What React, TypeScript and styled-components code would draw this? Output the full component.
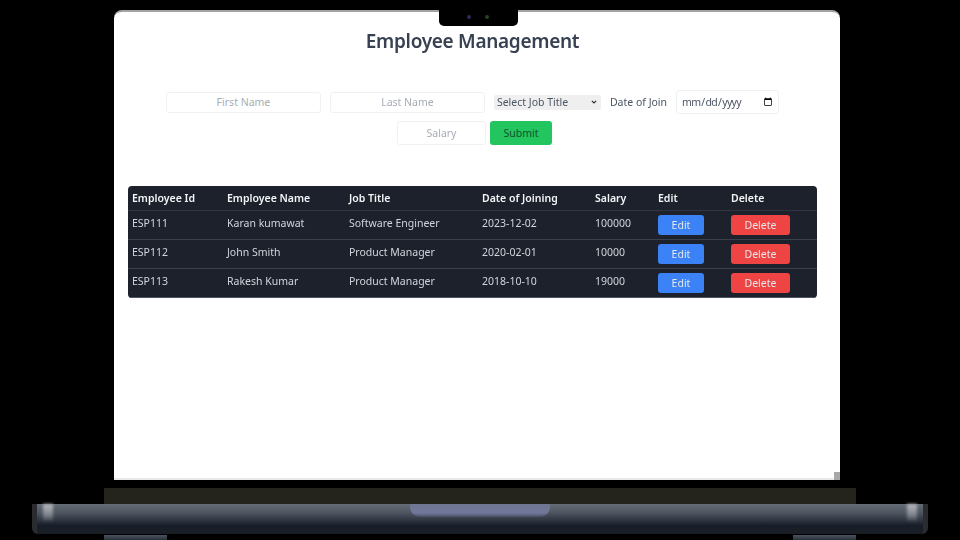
import React from "react";
import styled, { createGlobalStyle } from "styled-components";

const Global = createGlobalStyle`
  html, body { margin: 0; padding: 0; background: #000; }
  * { box-sizing: border-box; }
  body { font-family: "Noto Sans", "Liberation Sans", sans-serif; }
`;

const Laptop = styled.div`
  width: 960px;
  height: 540px;
  background: #000;
  overflow: hidden;
  display: flex;
  flex-direction: column;
  align-items: center;
  padding-top: 10px;
`;

const Screen = styled.main`
  position: relative;
  width: 726px;
  height: 470px;
  flex: none;
  margin-right: 6px;
  background: #fff;
  border-top: 2px solid #a3a3a3;
  border-bottom: 2px solid #e8e8e8;
  border-radius: 8px 8px 0 0;
  padding: 12px 13px 0 14px;
  color: #374151;
`;

const Notch = styled.div`
  position: absolute;
  top: -2px;
  left: 325px;
  width: 79px;
  height: 16px;
  background: #000;
  border-radius: 0 0 5px 5px;
  display: flex;
  justify-content: center;
  align-items: center;
  gap: 14px;
  padding: 0 2px 3px 0;
`;

const Lens = styled.span<{ $color: string }>`
  width: 4px;
  height: 4px;
  border-radius: 50%;
  background: ${(p) => p.$color};
  filter: blur(0.6px);
`;

const CornerMark = styled.span`
  position: absolute;
  right: 0;
  bottom: -2px;
  width: 6px;
  height: 8px;
  background: #a8a8a8;
`;

const Title = styled.h1`
  margin: 0;
  padding-right: 10px;
  font-size: 19px;
  line-height: 34px;
  font-weight: 600;
  letter-spacing: -0.3px;
  text-align: center;
  color: #374151;
  filter: blur(0.3px);
`;

const Form = styled.form`
  margin-top: 32px;
  display: flex;
  flex-wrap: wrap;
  justify-content: center;
  align-items: center;
  padding-right: 10px;
  font-size: 10.5px;
  color: #4b5563;
  filter: blur(0.3px);
`;

const Field = styled.input<{ $width: number; $height: number; $ml: number; $mr: number }>`
  width: ${(p) => p.$width}px;
  height: ${(p) => p.$height}px;
  margin-left: ${(p) => p.$ml}px;
  margin-right: ${(p) => p.$mr}px;
  border: 1px solid #f0f1f3;
  border-radius: 3px;
  background: #fff;
  font: 10.5px "Noto Sans", sans-serif;
  text-align: center;
  outline: none;
  padding: 0 4px;
  &::placeholder { color: #a8adb5; opacity: 1; }
`;

const JobSelect = styled.select`
  appearance: none;
  width: 107px;
  height: 15px;
  margin-right: 9px;
  border: none;
  border-radius: 2px;
  background: #efefef url("data:image/svg+xml,%3Csvg xmlns='http://www.w3.org/2000/svg' width='6' height='4'%3E%3Cpath d='M.8.8 3 3l2.2-2.2' fill='none' stroke='%23333' stroke-width='1.2'/%3E%3C/svg%3E") no-repeat right 4px center;
  color: #4b5563;
  font: 10.5px "Noto Sans", sans-serif;
  padding: 0 3px;
  outline: none;
`;

const Label = styled.label`
  margin-right: 9px;
  line-height: 15px;
  white-space: nowrap;
`;

const DateField = styled.input`
  width: 103px;
  height: 24px;
  border: 1px solid #f0f1f3;
  border-radius: 3px;
  background: #fff;
  color: #4b5563;
  font: 10.5px "Noto Sans", sans-serif;
  letter-spacing: -0.7px;
  padding: 0 3px 0 4px;
  outline: none;
`;

const Break = styled.div`
  flex-basis: 100%;
  height: 7px;
`;

const Submit = styled.button`
  width: 62px;
  height: 24px;
  border: none;
  border-radius: 3px;
  background: #22c55e;
  color: #14532d;
  font: 10.5px "Noto Sans", sans-serif;
  padding: 0;
`;

const Table = styled.table`
  margin-top: 41px;
  width: 689px;
  table-layout: fixed;
  border-collapse: separate;
  border-spacing: 0;
  background: #1d212c;
  border-radius: 4px;
  overflow: hidden;
  font-size: 10.5px;
  color: #d1d5db;
  filter: blur(0.3px);
`;

const Col = styled.col<{ $w: number }>`
  width: ${(p) => p.$w}px;
`;

const Head = styled.th`
  height: 25px;
  padding: 0 4px 1px;
  text-align: left;
  font-weight: 600;
  color: #f3f4f6;
  border-bottom: 1px solid #2f3542;
`;

const Cell = styled.td`
  height: 29px;
  padding: 0 4px 5px;
  text-align: left;
  vertical-align: middle;
  border-bottom: 1px solid #3a404c;
  tr:last-child & { border-bottom-color: #4b5563; }
`;

const ActionCell = styled.td`
  height: 29px;
  padding: 0 4px;
  vertical-align: middle;
  border-bottom: 1px solid #3a404c;
  tr:last-child & { border-bottom-color: #4b5563; }
`;

const Action = styled.button<{ $bg: string; $w: number }>`
  display: block;
  width: ${(p) => p.$w}px;
  height: 20px;
  border: none;
  border-radius: 3px;
  background: ${(p) => p.$bg};
  color: #e5e7eb;
  font: 10.5px "Noto Sans", sans-serif;
  padding: 0;
`;

const Hinge = styled.div`
  margin-top: 8px;
  width: 752px;
  height: 16px;
  flex: none;
  background: #24231c;
`;

const Base = styled.div`
  position: relative;
  width: 896px;
  height: 30px;
  flex: none;
  background: linear-gradient(180deg, #666c75 0%, #4d545e 30%, #2e3440 55%, #181d28 72%, #191e26 100%);
  border-left: 5px solid #2a2c30;
  border-right: 5px solid #2a2c30;
  border-radius: 0 0 6px 6px;
`;

const Groove = styled.div`
  position: absolute;
  top: 0;
  left: 373px;
  width: 140px;
  height: 13px;
  background: linear-gradient(180deg, #6f7692 0%, #70779a 70%, #4a4f60 100%);
  border-radius: 0 0 10px 10px;
`;

const Glint = styled.div<{ $side: "left" | "right" }>`
  position: absolute;
  top: 0;
  ${(p) => p.$side}: 6px;
  width: 10px;
  height: 18px;
  background: linear-gradient(180deg, #b5b8be 0%, #8a8e96 50%, transparent 100%);
  filter: blur(1.5px);
`;

const Feet = styled.div`
  width: 752px;
  height: 6px;
  flex: none;
  display: flex;
  justify-content: space-between;
  align-items: flex-end;
`;

const Foot = styled.div`
  width: 63px;
  height: 5px;
  background: linear-gradient(180deg, #4b5262, #2b3038);
`;

const columns = [95, 122, 133, 113, 63, 73, 90];
const headers = ["Employee Id", "Employee Name", "Job Title", "Date of Joining", "Salary", "Edit", "Delete"];
const rows = [
  ["ESP111", "Karan kumawat", "Software Engineer", "2023-12-02", "100000"],
  ["ESP112", "John Smith", "Product Manager", "2020-02-01", "10000"],
  ["ESP113", "Rakesh Kumar", "Product Manager", "2018-10-10", "19000"],
];

export default function App() {
  return (
    <>
      <Global />
      <Laptop>
        <Screen>
          <Notch>
            <Lens $color="#2e2a5e" />
            <Lens $color="#24451f" />
          </Notch>
          <Title>Employee Management</Title>
          <Form onSubmit={(e) => e.preventDefault()}>
            <Field $width={155} $height={21} $ml={0} $mr={9} placeholder="First Name" />
            <Field $width={155} $height={21} $ml={0} $mr={9} placeholder="Last Name" />
            <JobSelect defaultValue="">
              <option value="">Select Job Title</option>
              <option>Software Engineer</option>
              <option>Product Manager</option>
            </JobSelect>
            <Label>Date of Join</Label>
            <DateField type="date" />
            <Break />
            <Field $width={89} $height={24} $ml={4} $mr={4} placeholder="Salary" />
            <Submit type="submit">Submit</Submit>
          </Form>
          <Table>
            <colgroup>
              {columns.map((w, i) => (
                <Col key={i} $w={w} />
              ))}
            </colgroup>
            <thead>
              <tr>
                {headers.map((h) => (
                  <Head key={h}>{h}</Head>
                ))}
              </tr>
            </thead>
            <tbody>
              {rows.map((r) => (
                <tr key={r[0]}>
                  {r.map((c, i) => (
                    <Cell key={i}>{c}</Cell>
                  ))}
                  <ActionCell>
                    <Action type="button" $bg="#3b82f6" $w={46}>Edit</Action>
                  </ActionCell>
                  <ActionCell>
                    <Action type="button" $bg="#ef4444" $w={59}>Delete</Action>
                  </ActionCell>
                </tr>
              ))}
            </tbody>
          </Table>
          <CornerMark />
        </Screen>
        <Hinge />
        <Base>
          <Groove />
          <Glint $side="left" />
          <Glint $side="right" />
        </Base>
        <Feet>
          <Foot />
          <Foot />
        </Feet>
      </Laptop>
    </>
  );
}
